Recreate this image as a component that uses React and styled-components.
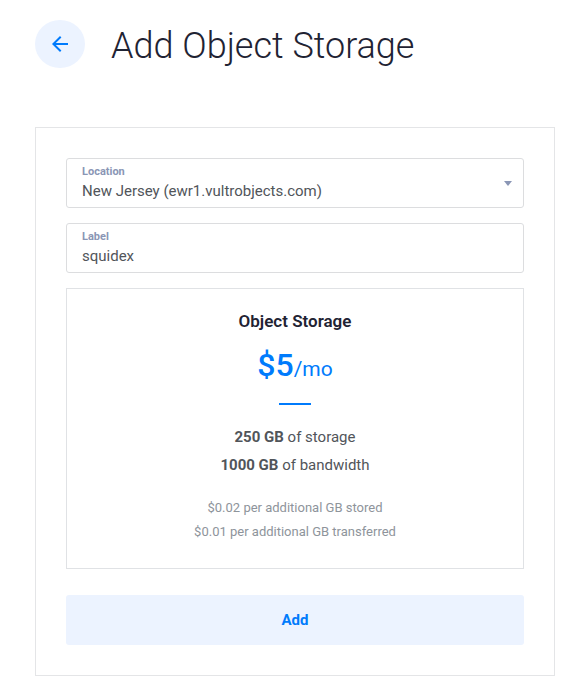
import React from "react";
import styled, { createGlobalStyle } from "styled-components";

const GlobalStyle = createGlobalStyle`
  *, *::before, *::after { box-sizing: border-box; }
  body { margin: 0; background: #fff; font-family: Roboto, sans-serif; color: #51555a; }
`;
const Page = styled.main`
  width: 580px;
  height: 694px;
  padding: 20px 25px 0 35px;
  overflow: hidden;
`;
const Header = styled.header`
  display: flex;
  align-items: center;
  height: 48px;
  gap: 26px;
`;
const BackButton = styled.button`
  display: flex;
  align-items: center;
  justify-content: center;
  width: 50px;
  height: 48px;
  padding: 0;
  border: 0;
  border-radius: 50%;
  background: #ecf3ff;
`;
const Title = styled.h1`
  margin: 0;
  padding-top: 3px;
  font-size: 36px;
  font-weight: 300;
  line-height: 48px;
  color: #1f2333;
  white-space: nowrap;
`;
const Panel = styled.section`
  display: flex;
  flex-direction: column;
  width: 520px;
  height: 549px;
  margin-top: 59px;
  padding: 30px;
  border: 1px solid #e4e5e7;
`;
const Field = styled.div`
  display: flex;
  align-items: center;
  justify-content: space-between;
  height: 50px;
  margin-bottom: 15px;
  padding: 0 11px 0 15px;
  border: 1px solid #dcdddf;
  border-radius: 3px;
`;
const FieldLabel = styled.div`
  padding-top: 1px;
  font-size: 11px;
  font-weight: 700;
  line-height: 16px;
  color: #8a96b5;
`;
const FieldValue = styled.div`
  font-size: 15px;
  line-height: 23px;
`;
const Plan = styled.div`
  display: flex;
  flex-direction: column;
  align-items: center;
  height: 281px;
  padding-top: 22px;
  border: 1px solid #e0e2e5;
`;
const PlanName = styled.h2`
  margin: 0;
  font-size: 17px;
  font-weight: 600;
  line-height: 20px;
  color: #1f2333;
`;
const Price = styled.div`
  height: 40px;
  margin-top: 14px;
  font-size: 32px;
  font-weight: 500;
  line-height: 40px;
  color: #007bfc;
`;
const Period = styled.span`
  font-size: 21px;
  font-weight: 400;
`;
const Rule = styled.div`
  width: 32px;
  height: 2px;
  margin: 18px 0;
  background: #007bfc;
`;
const Allowance = styled.div`
  font-size: 15px;
  line-height: 28px;
`;
const Extras = styled.div`
  margin-top: 17px;
  text-align: center;
  font-size: 13px;
  line-height: 24px;
  color: #8e949b;
`;
const AddButton = styled.button`
  height: 50px;
  margin-top: 26px;
  padding: 0;
  border: 0;
  border-radius: 3px;
  background: #ecf3ff;
  font: 700 15px Roboto, sans-serif;
  color: #007bfc;
`;

export default function App() {
  return (
    <Page>
      <GlobalStyle />
      <Header>
        <BackButton aria-label="Back">
          <svg width="24" height="24" viewBox="0 0 24 24" fill="#007bfc">
            <path d="M20 11H7.83l5.59-5.59L12 4l-8 8 8 8 1.41-1.41L7.83 13H20v-2z" />
          </svg>
        </BackButton>
        <Title>Add Object Storage</Title>
      </Header>
      <Panel>
        <Field>
          <div>
            <FieldLabel>Location</FieldLabel>
            <FieldValue>New Jersey (ewr1.vultrobjects.com)</FieldValue>
          </div>
          <svg width="8" height="5" viewBox="0 0 8 5"><path d="M0 0h8L4 5z" fill="#8a96b5" /></svg>
        </Field>
        <Field>
          <div>
            <FieldLabel>Label</FieldLabel>
            <FieldValue>squidex</FieldValue>
          </div>
        </Field>
        <Plan>
          <PlanName>Object Storage</PlanName>
          <Price>$5<Period>/mo</Period></Price>
          <Rule />
          <Allowance><b>250 GB</b> of storage</Allowance>
          <Allowance><b>1000 GB</b> of bandwidth</Allowance>
          <Extras>
            <div>$0.02 per additional GB stored</div>
            <div>$0.01 per additional GB transferred</div>
          </Extras>
        </Plan>
        <AddButton>Add</AddButton>
      </Panel>
    </Page>
  );
}
